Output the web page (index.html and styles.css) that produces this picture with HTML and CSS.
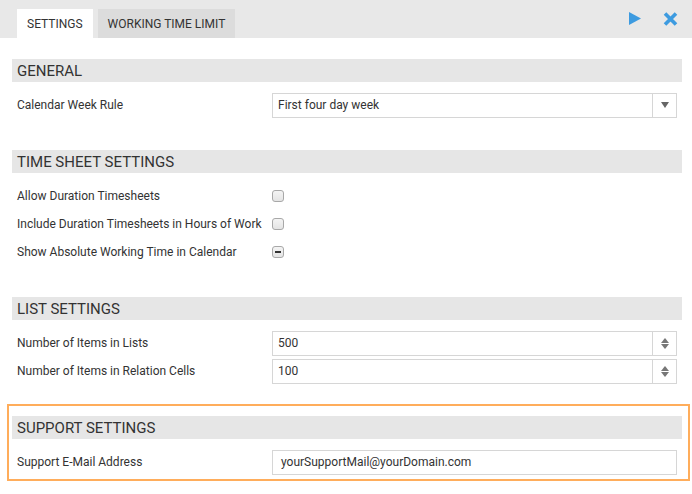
FILE: index.html
```html
<!DOCTYPE html>
<html>
<head>
<meta charset="utf-8">
<link rel="stylesheet" href="styles.css">
</head>
<body>
<div class="topbar">
  <div class="tab tab-active">SETTINGS</div>
  <div class="tab">WORKING TIME LIMIT</div>
  <div class="actions">
    <svg class="icon-play" width="12" height="13" viewBox="0 0 12 13"><polygon points="0,0 12,6.5 0,13" fill="#3d9be0"/></svg>
    <svg class="icon-close" width="15" height="14" viewBox="0 0 15 14"><path d="M2 1.5 L13 12.5 M13 1.5 L2 12.5" stroke="#3d9be0" stroke-width="3.6" stroke-linecap="butt"/></svg>
  </div>
</div>

<div class="content">
  <section class="section first">
    <div class="sec-head">GENERAL</div>
    <div class="rows">
      <div class="row">
        <div class="label">Calendar Week Rule</div>
        <div class="field select">
          <span class="value">First four day week</span>
          <span class="btn"><span class="arrow-down"></span></span>
        </div>
      </div>
    </div>
  </section>

  <section class="section">
    <div class="sec-head">TIME SHEET SETTINGS</div>
    <div class="rows">
      <div class="row">
        <div class="label">Allow Duration Timesheets</div>
        <div class="check"></div>
      </div>
      <div class="row">
        <div class="label">Include Duration Timesheets in Hours of Work</div>
        <div class="check"></div>
      </div>
      <div class="row">
        <div class="label">Show Absolute Working Time in Calendar</div>
        <div class="check indeterminate"><span class="dash"></span></div>
      </div>
    </div>
  </section>

  <section class="section">
    <div class="sec-head">LIST SETTINGS</div>
    <div class="rows">
      <div class="row">
        <div class="label">Number of Items in Lists</div>
        <div class="field number">
          <span class="value">500</span>
          <span class="btn spin"><span class="arrow-up"></span><span class="arrow-down"></span></span>
        </div>
      </div>
      <div class="row">
        <div class="label">Number of Items in Relation Cells</div>
        <div class="field number">
          <span class="value">100</span>
          <span class="btn spin"><span class="arrow-up"></span><span class="arrow-down"></span></span>
        </div>
      </div>
    </div>
  </section>

  <section class="section highlight">
    <div class="sec-head">SUPPORT SETTINGS</div>
    <div class="rows">
      <div class="row">
        <div class="label">Support E-Mail Address</div>
        <div class="field text">
          <span class="value">yourSupportMail@yourDomain.com</span>
        </div>
      </div>
    </div>
  </section>
</div>
</body>
</html>
```

FILE: styles.css
```css
* { box-sizing: border-box; }
html, body { margin: 0; padding: 0; background: #fff; }
body {
  font-family: Roboto, "Liberation Sans", sans-serif;
  font-size: 12px;
  color: #333;
  width: 692px;
  height: 494px;
  overflow: hidden;
}

.topbar {
  height: 38px;
  background: #e8e8e8;
  display: flex;
  align-items: flex-end;
  padding-left: 17px;
  gap: 5px;
}
.tab {
  height: 29px;
  display: flex;
  align-items: center;
  padding: 0 10px;
  background: #dcdcdc;
  color: #333;
  font-size: 12px;
}
.tab-active { background: #fff; }
.actions {
  margin-left: auto;
  align-self: center;
  display: flex;
  align-items: center;
  gap: 22px;
  padding-right: 14px;
  margin-top: -1px;
}
.actions svg { display: block; }

.content {
  padding: 0 10px 0 12px;
}
.section { margin-top: 31px; }
.section.first { margin-top: 21px; }
.sec-head {
  height: 23px;
  background: #e6e6e6;
  padding-left: 5px;
  display: flex;
  align-items: center;
  font-size: 15px;
  color: #333;
}
.rows {
  margin-top: 9px;
  padding: 0 5px;
}
.row {
  height: 28px;
  display: flex;
  align-items: center;
}
.label {
  width: 255px;
  flex: none;
  color: #333;
}

.field {
  flex: 1;
  height: 25px;
  border: 1px solid #d6d6d6;
  display: flex;
  align-items: stretch;
  font-size: 12px;
  color: #333;
  background: #fff;
}
.field .value {
  flex: 1;
  display: flex;
  align-items: center;
  padding-left: 5px;
}
.field.text .value { padding-left: 8px; }
.field .btn {
  width: 24px;
  flex: none;
  border-left: 1px solid #d6d6d6;
  display: flex;
  flex-direction: column;
  align-items: center;
  justify-content: center;
}
.arrow-down {
  width: 0; height: 0;
  border-left: 4px solid transparent;
  border-right: 4px solid transparent;
  border-top: 6px solid #666;
}
.arrow-up {
  width: 0; height: 0;
  border-left: 4.5px solid transparent;
  border-right: 4.5px solid transparent;
  border-bottom: 5px solid #777;
  margin-bottom: 1px;
}
.spin .arrow-down {
  border-left-width: 4.5px;
  border-right-width: 4.5px;
  border-top-width: 5px;
  border-top-color: #777;
}

.check {
  width: 12px;
  height: 12px;
  border: 1px solid #a8a8a8;
  border-radius: 3px;
  background: linear-gradient(#f4f4f4, #e4e4e4);
  display: flex;
  align-items: center;
  justify-content: center;
}
.check .dash {
  width: 6px;
  height: 2px;
  background: #333;
}

.highlight {
  margin-top: 19px;
  margin-left: -5px;
  margin-right: -8px;
  border: 2px solid #ffad5b;
  padding: 10px 6px 3px 3px;
}
```
